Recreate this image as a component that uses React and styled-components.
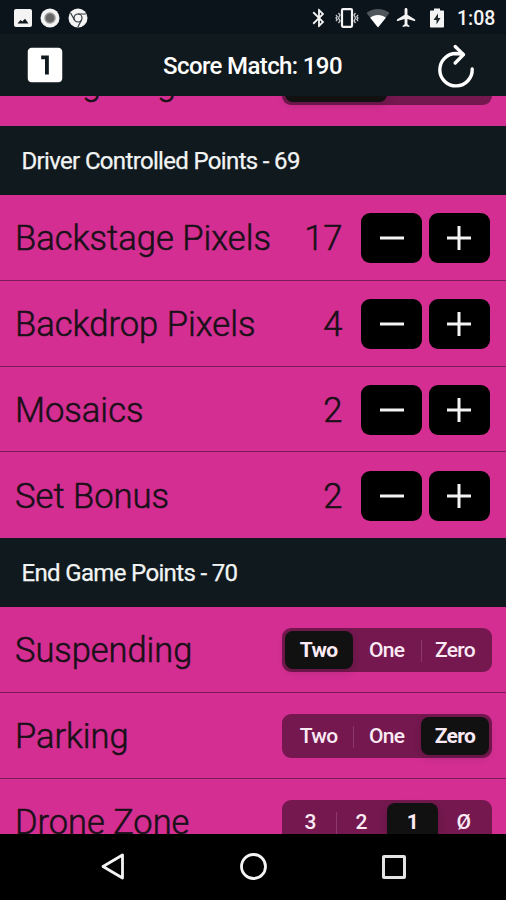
import React, { Component } from 'react'
import styled, { createGlobalStyle, ThemeProvider } from 'styled-components'
import { MdBluetooth, MdFlight, MdLooksOne } from 'react-icons/md'

const theme = {
  colors: {
    pink: '#d42e92',
    dark: '#10191e',
    status: '#0c141b',
    segment: '#74184f',
    ink: '#191018'
  }
}

const GlobalStyle = createGlobalStyle`
  *{
    box-sizing: border-box;
  }
  body{
    margin: 0;
    background-color: #000;
    font-family: Roboto, "Liberation Sans", sans-serif;
  }
  button{
    border: 0;
    padding: 0;
    font-family: inherit;
  }
  svg{
    display: block;
    flex: none;
  }
`

const Screen = styled.div`
  display: flex;
  flex-direction: column;
  width: 506px;
  height: 900px;
  overflow: hidden;
`

const StatusBar = styled.div`
  display: flex;
  flex: none;
  align-items: center;
  height: 34px;
  padding: 1px 11px 0 14px;
  color: #f4f4f4;
  background-color: ${ ({ theme }) => theme.colors.status };
`

const Notifications = styled.div`
  display: flex;
  align-items: center;
  gap: 8px;
  margin-right: auto;
`

const StatusIcon = styled.span`
  margin-right: ${ ({ $space }) => $space }px;
`

const Clock = styled.span`
  width: 38px;
  font-size: 19.5px;
  font-weight: 500;
  line-height: 33px;
  padding-top: 1px;
  white-space: nowrap;
`

const Header = styled.header`
  display: flex;
  flex: none;
  align-items: center;
  justify-content: space-between;
  height: 62px;
  padding: 0 24px 0 22px;
  color: #fff;
  background-color: ${ ({ theme }) => theme.colors.dark };
`

const Title = styled.h1`
  margin: 1px 0 0 7px;
  font-size: 24px;
  font-weight: 500;
  letter-spacing: -0.62px;
`

const List = styled.main`
  flex: 1;
  min-height: 0;
  overflow: hidden;
  background-color: ${ ({ theme }) => theme.colors.pink };
`

const Scrolled = styled.div`
  margin-top: -56px;
`

const GroupTitle = styled.h2`
  display: flex;
  align-items: center;
  height: 69.2px;
  margin: 0;
  padding: 1.2px 21.5px 0;
  color: #f2f4f4;
  background-color: ${ ({ theme }) => theme.colors.dark };
  font-size: 24px;
  font-weight: 400;
  letter-spacing: -0.66px;
  -webkit-text-stroke: 0.25px currentColor;
`

const Row = styled.div`
  display: flex;
  align-items: center;
  height: 85.8px;
  padding: 0 14px 0 15px;
  color: ${ ({ theme }) => theme.colors.ink };
  border-bottom: ${ ({ $last }) => $last ? '0' : '1.5px solid #7d1b58' };
`

const Label = styled.span`
  flex: 1;
  padding-top: 2px;
  font-size: 34.6px;
  font-weight: 300;
  white-space: nowrap;
  -webkit-text-stroke: 0.55px currentColor;
`

const Value = styled(Label)`
  flex: none;
  margin-right: 18.5px;
`

const SegmentLabel = styled(Label)`
  padding-top: 0;
  font-size: 34.4px;
`

const Stepper = styled.div`
  display: flex;
  gap: 6.5px;
  margin: 1.6px 2.5px 0 0;
`

const StepButton = styled.button`
  display: flex;
  align-items: center;
  justify-content: center;
  width: 61px;
  height: 50px;
  border-radius: 9px;
  color: #f4f4f4;
  background-color: #000;
`

const Segment = styled.div`
  display: flex;
  width: 210.5px;
  height: 44px;
  padding: 3px;
  border-radius: 9px;
  background-color: ${ ({ theme }) => theme.colors.segment };
`

const SegmentButton = styled.button`
  position: relative;
  flex: 1;
  border-radius: 8px;
  color: #fbeaf4;
  background-color: ${ ({ $active }) => $active ? '#111' : 'transparent' };
  box-shadow: ${ ({ $active }) => $active ? '0 3px 8px rgba(0, 0, 0, 0.14)' : 'none' };
  font-size: 21px;
  font-weight: ${ ({ $active }) => $active ? 700 : 500 };
  letter-spacing: -0.7px;
  &::before{
    content: '';
    display: ${ ({ $divider }) => $divider ? 'block' : 'none' };
    position: absolute;
    top: 9px;
    bottom: 7px;
    left: 0;
    width: 1px;
    background-color: #8d3770;
  }
`

const NavBar = styled.footer`
  display: flex;
  flex: none;
  align-items: center;
  justify-content: space-between;
  height: 66px;
  padding: 0 99px 0 98px;
  background-color: #000;
`

const ImageIcon = () => (
  <svg width="18" height="18" viewBox="0 0 18 18">
    <rect width="18" height="18" rx="2" fill="#f4f4f4" />
    <path d="M3.500 14.500L6.500 11l1.800 1.600 2.700-2.800 3.500 4.700z" fill="#10191e" />
  </svg>
)

const RecordIcon = () => (
  <svg width="20" height="20" viewBox="0 0 20 20">
    <circle cx="10" cy="10" r="9.5" fill="#f4f4f4" />
    <circle cx="10" cy="10" r="5" fill="#666" stroke="#999" strokeWidth="1.5" />
  </svg>
)

const ChromeIcon = () => (
  <svg width="20" height="20" viewBox="0 0 20 20">
    <circle cx="10" cy="10" r="9.5" fill="#f4f4f4" />
    <g fill="none" stroke="#30383c" strokeWidth="1.2">
      <circle cx="10" cy="10" r="4" />
      <path d="M10 6h8M6.5 12L2.6 5M13.5 12l-3.7 7" />
    </g>
  </svg>
)

const VibrateIcon = () => (
  <svg width="24" height="20" viewBox="0 0 24 20" fill="none" stroke="#f4f4f4">
    <rect x="7" y="1.2" width="10" height="17.6" rx="1" strokeWidth="2.2" />
    <path d="M3.500 5L5 7 3.500 10 5 13l-1.500 2M1 7l1.200 1.500L1 10l1.200 1.500L1 13M20.500 5L19 7l1.500 3L19 13l1.500 2M23 7l-1.200 1.500L23 10l-1.200 1.500L23 13" strokeWidth="1.3" opacity="0.8" />
  </svg>
)

const WifiIcon = () => (
  <svg width="24" height="20" viewBox="0 0 24 20">
    <path d="M12 19.500L0.500 5C7-0.500 17-0.500 23.500 5z" fill="#50575c" />
    <path d="M12 19.500L4.200 9.700c4.500-3.700 11.100-3.700 15.600 0z" fill="#fff" />
  </svg>
)

const BatteryIcon = () => (
  <svg width="14" height="20" viewBox="0 0 14 20">
    <path d="M1 2.500h3V.5h6v2h3c.6 0 1 .4 1 1V18.500c0 .6-.4 1-1 1H1c-.6 0-1-.4-1-1V3.500c0-.6.4-1 1-1z" fill="#f4f4f4" />
    <path d="M8 5.500L3.500 12H6.500v4.500L10.500 10H8z" fill="#20282c" />
  </svg>
)

const ResetIcon = () => (
  <svg width="52" height="52" viewBox="0 0 52 52" fill="none" stroke="#fff" strokeWidth="3.400" strokeLinecap="round" strokeLinejoin="round">
    <path d="M42.200 30A16.200 16.200 0 1 1 26 14.500L33 15.300" />
    <path d="M25.200 7.500L33.500 15.600 25.200 24" />
  </svg>
)

const BackIcon = () => (
  <svg width="28" height="30" viewBox="0 0 28 30">
    <path d="M24.500 3v23L5 14.500z" fill="none" stroke="#f4f4f4" strokeWidth="2.800" strokeLinejoin="round" />
  </svg>
)

const HomeIcon = () => (
  <svg width="28" height="28" viewBox="0 0 28 28">
    <circle cx="13.500" cy="13.500" r="12" fill="none" stroke="#f4f4f4" strokeWidth="2.800" />
  </svg>
)

const RecentIcon = () => (
  <svg width="26" height="26" viewBox="0 0 26 26">
    <rect x="2.500" y="2.500" width="21" height="21" rx="0.500" fill="none" stroke="#e4e4e4" strokeWidth="3" />
  </svg>
)

const StepIcon = ({ plus }) => (
  <svg width="26" height="26" viewBox="0 0 26 26" stroke="currentColor" strokeWidth="3">
    <path d={plus ? 'M1 13h24M13 1v24' : 'M1 13h24'} />
  </svg>
)

const driverRows = ['Backstage Pixels', 'Backdrop Pixels', 'Mosaics', 'Set Bonus']

class App extends Component {
  // constructor to set state and bind "this"
  constructor (props) {
    super(props)
    this.state = {
      'Backstage Pixels': 17,
      'Backdrop Pixels': 4,
      'Mosaics': 2,
      'Set Bonus': 2,
      'Navigating': 0,
      'Suspending': 0,
      'Parking': 2,
      'Drone Zone': 2
    }
    this.step = this.step.bind(this)
  }

  // function to change a counter, never below zero
  step (name, amount) {
    this.setState(prevState => ({
      [name]: Math.max(0, prevState[name] + amount)
    }))
  }

  renderSegment (name, options, last) {
    const selected = this.state[name]
    return (
      <Row $last={last}>
        <SegmentLabel>{name}</SegmentLabel>
        <Segment>
          {options.map((option, i) => (
            <SegmentButton
              key={option}
              $active={i === selected}
              $divider={i > 0 && i !== selected && i - 1 !== selected}
              onClick={() => this.setState({ [name]: i })}
            >
              {option}
            </SegmentButton>
          ))}
        </Segment>
      </Row>
    )
  }

  render () {
    return (
      <ThemeProvider theme={theme}>
        <GlobalStyle />
        <Screen>
          <StatusBar>
            <Notifications>
              <ImageIcon />
              <RecordIcon />
              <ChromeIcon />
            </Notifications>
            <StatusIcon $space={4.5}><MdBluetooth size={22} /></StatusIcon>
            <StatusIcon $space={7}><VibrateIcon /></StatusIcon>
            <StatusIcon $space={5.5}><WifiIcon /></StatusIcon>
            <StatusIcon $space={12}><MdFlight size={23} /></StatusIcon>
            <StatusIcon $space={13}><BatteryIcon /></StatusIcon>
            <Clock>1:08</Clock>
          </StatusBar>
          <Header>
            <MdLooksOne size={46} />
            <Title>Score Match: 190</Title>
            <ResetIcon />
          </Header>
          <List>
            <Scrolled>
              {this.renderSegment('Navigating', ['Yes', 'No'], true)}
              <GroupTitle>Driver Controlled Points - 69</GroupTitle>
              {driverRows.map((name, i) => (
                <Row key={name} $last={i === driverRows.length - 1}>
                  <Label>{name}</Label>
                  <Value>{this.state[name]}</Value>
                  <Stepper>
                    <StepButton onClick={() => this.step(name, -1)}><StepIcon /></StepButton>
                    <StepButton onClick={() => this.step(name, 1)}><StepIcon plus /></StepButton>
                  </Stepper>
                </Row>
              ))}
              <GroupTitle>End Game Points - 70</GroupTitle>
              {this.renderSegment('Suspending', ['Two', 'One', 'Zero'])}
              {this.renderSegment('Parking', ['Two', 'One', 'Zero'])}
              {this.renderSegment('Drone Zone', ['3', '2', '1', 'Ø'], true)}
            </Scrolled>
          </List>
          <NavBar>
            <BackIcon />
            <HomeIcon />
            <RecentIcon />
          </NavBar>
        </Screen>
      </ThemeProvider>
    )
  }
}

export default App
